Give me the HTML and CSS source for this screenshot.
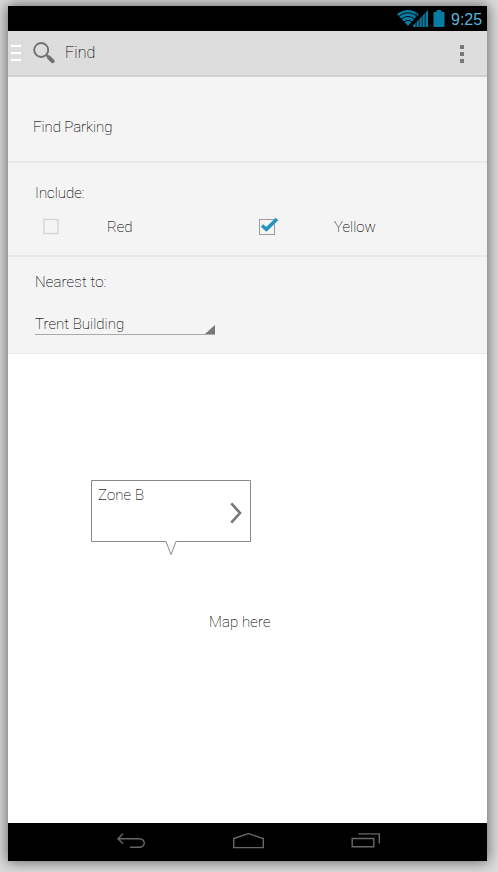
FILE: index.html
```html
<!DOCTYPE html>
<html lang="en">
<head>
<meta charset="utf-8">
<title>Find Parking</title>
<link rel="stylesheet" href="styles.css">
</head>
<body>
<div class="device">
  <div class="status">
    <svg class="wifi" width="22" height="16" viewBox="0 0 22 16"><path d="M0 4Q11-4 22 4L11 16Z" fill="#087ba3"/><path d="M1.5 6.4Q11-1 20.5 6.4M4 9.3Q11 3.7 18 9.3M6.7 12Q11 8.7 15.3 12" fill="none" stroke="#000" stroke-width=".9"/></svg>
    <svg class="signal" width="15" height="17" viewBox="0 0 15 17"><path d="M-2 17L15-1V17Z" fill="#000"/><path d="M0 17V15.5L15 0V17Z" fill="#087ba3"/><path d="M3.2 0V17M6.2 0V17M9.2 0V17M12.2 0V17" stroke="#000" stroke-width=".7"/></svg>
    <svg class="battery" width="12" height="17" viewBox="0 0 12 17"><path d="M3.5 0H8.5V2H10.5Q11.5 2 11.5 3V16Q11.5 17 10.5 17H1.5Q.5 17 .5 16V3Q.5 2 1.5 2H3.5Z" fill="#087ba3"/></svg>
    <span class="clock">9:25</span>
  </div>
  <header class="appbar">
    <svg class="drawer" width="11" height="17" viewBox="0 0 11 17"><path d="M0 1H10M0 8H10M0 15H10" stroke="#fff" stroke-width="2"/></svg>
    <svg class="search" width="23" height="23" viewBox="0 0 23 23"><circle cx="8.2" cy="8" r="7" fill="none" stroke="#727272" stroke-width="1.9"/><path d="M13 12.6L16 15.5" stroke="#727272" stroke-width="2.2"/><path d="M15.8 15.4L19.7 19.2" stroke="#727272" stroke-width="4" stroke-linecap="round"/></svg>
    <h1 class="title">Find</h1>
    <svg class="more" width="4" height="18" viewBox="0 0 4 18"><path d="M0 0H4V4H0ZM0 7H4V11H0ZM0 14H4V18H0Z" fill="#777"/></svg>
  </header>
  <section class="panel heading">Find Parking</section>
  <section class="panel include">
    <div class="label">Include:</div>
    <div class="options">
      <div class="option">
        <svg class="check" width="22" height="20" viewBox="0 0 22 20"><rect x="2" y="3.5" width="14" height="14" fill="none" stroke="#d3d3d3" stroke-width="1.3"/></svg>
        <span>Red</span>
      </div>
      <div class="option">
        <svg class="check" width="22" height="20" viewBox="0 0 22 20"><rect x="1.5" y="3.5" width="15" height="15" fill="none" stroke="#9c9c9c"/><path d="M4 9.5L8.4 13.4L19 3" fill="none" stroke="#2693bb" stroke-width="3.6"/></svg>
        <span>Yellow</span>
      </div>
    </div>
  </section>
  <section class="panel nearest">
    <div class="label wide">Nearest to:</div>
    <div class="spinner"><span>Trent Building</span><svg width="10" height="9" viewBox="0 0 10 9"><path d="M10 0V9H0Z" fill="#777"/></svg></div>
  </section>
  <main class="map">
    <div class="callout">
      <svg class="bubble" width="160" height="76" viewBox="0 0 160 76"><path d="M.5.5H159.5V61.5H85L80 74.5L75 61.5H.5Z" fill="#fff" stroke="#888"/></svg>
      <span class="zone">Zone B</span>
      <svg class="chevron" width="12" height="22" viewBox="0 0 12 22"><path d="M1.3 1.3L10 11L1.3 20.7" fill="none" stroke="#777" stroke-width="2.6"/></svg>
    </div>
    <p class="placeholder">Map here</p>
  </main>
  <nav class="navbar">
    <svg width="28" height="16" viewBox="0 0 28 16"><path d="M6 .8L1 5.8L6 10.8M1 5.8H22C29 5.8 29 14.3 22 14.3H13" fill="none" stroke="#686868" stroke-width="1.4"/></svg>
    <svg width="31" height="16" viewBox="0 0 31 16"><path d="M.7 14.6V5.6L15.5.6L30.3 5.6V14.6Z" fill="none" stroke="#686868" stroke-width="1.4"/></svg>
    <svg width="29" height="16" viewBox="0 0 29 16"><path d="M1.2 5.5H22.8V13.8H1.2ZM7.5 .9H28.3V10.5" fill="none" stroke="#686868" stroke-width="1.4"/></svg>
  </nav>
</div>
</body>
</html>
```
FILE: styles.css
```css
* { box-sizing: border-box; }
body {
  margin: 0;
  height: 872px;
  padding: 6px 11px 11px 8px;
  overflow: hidden;
  background: #dcdcdc;
  font: 100 15px/20px Roboto, "Liberation Sans", sans-serif;
  color: #000;
  -webkit-text-stroke: .08px #000;
}
svg { display: block; flex: none; }
.device {
  display: flex;
  flex-direction: column;
  height: 855px;
  background: #fff;
  box-shadow: 0 0 13px 1px rgba(0, 0, 0, .55);
}
.status {
  display: flex;
  height: 25px;
  padding: 4px 4px 0 389px;
  background: #000;
}
.wifi { margin-right: -10px; }
.signal { margin-left: 4px; }
.battery { margin-left: 5px; }
.clock {
  margin-left: 6px;
  color: #58b2dc;
  font: 400 16px/19px "Liberation Sans", sans-serif;
  -webkit-text-stroke: 0;
}
.appbar {
  display: flex;
  height: 46px;
  padding: 0 23px 0 3px;
  background: #ddd;
  border-bottom: 2px solid #d0d0d0;
}
.drawer { margin-top: 14px; }
.search { margin: 11px 0 0 11px; }
.title { margin: 12px 0 0 9px; font: inherit; font-size: 16px; letter-spacing: .1px; }
.more { margin: 14px 0 0 auto; }
.panel { background: #f4f4f4; border-bottom: 2px solid #e9e9e9; }
.heading { height: 86px; padding: 40px 25px 0; letter-spacing: -.07px; }
.include { height: 94px; padding: 20px 27px 0; }
.options { display: grid; grid-template-columns: 216px 1fr; margin: 14px 0 0 7px; }
.option { display: flex; }
.check { margin: -1px 0 0; }
.option span { margin-left: 43px; }
.option + .option span { margin-left: 54px; }
.nearest { height: 97px; padding: 15px 27px 0; border-bottom: 1px solid #ebebeb; }
.wide { letter-spacing: .15px; }
.spinner {
  display: flex;
  justify-content: space-between;
  align-items: flex-end;
  width: 180px;
  height: 21px;
  margin-top: 22px;
  border-bottom: 1px solid #aaa;
}
.spinner span { letter-spacing: .05px; }
.map { flex: 1; padding: 126px 0 0 83px; }
.callout { position: relative; display: flex; width: 160px; height: 76px; padding: 5px 9px 0 7px; }
.bubble { position: absolute; top: 0; left: 0; }
.zone, .chevron { position: relative; }
.zone { letter-spacing: .1px; }
.chevron { margin: 17px 0 0 auto; }
.placeholder { margin: 56px 0 0 118px; letter-spacing: .1px; }
.navbar {
  display: grid;
  grid-template-columns: 116px 118px 29px;
  height: 38px;
  padding: 10px 0 0 109px;
  background: #000;
}
```
